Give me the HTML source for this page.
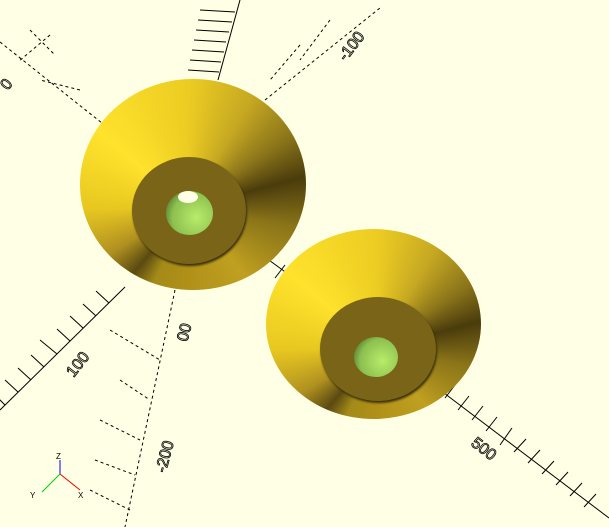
<!DOCTYPE html>
<html><head><style>
html,body{margin:0;padding:0;background:#ffffe5;width:609px;height:527px;overflow:hidden;position:relative;font-family:"Liberation Sans",sans-serif}
.c{position:absolute;border-radius:50%}
</style></head><body>
<svg width="609" height="527" style="position:absolute;left:0;top:0" stroke="#000" fill="none" stroke-width="1">
 <line x1="440" y1="390" x2="609" y2="518"/>
 <g>
  <line x1="455" y1="385" x2="445" y2="398"/>
  <line x1="469" y1="396" x2="458" y2="410"/>
  <line x1="483" y1="406" x2="472" y2="420"/>
  <line x1="497" y1="417" x2="486" y2="431"/>
  <line x1="512" y1="428" x2="500" y2="445"/>
  <line x1="526" y1="439" x2="514" y2="452"/>
  <line x1="540" y1="450" x2="528" y2="463"/>
  <line x1="554" y1="461" x2="542" y2="474"/>
  <line x1="568" y1="472" x2="556" y2="485"/>
  <line x1="582" y1="483" x2="570" y2="496"/>
  <line x1="596" y1="494" x2="584" y2="507"/>
 </g>
 <g fill="none" stroke="#000" stroke-width="0.8">
 <text x="470" y="455" font-size="16" transform="rotate(38 485 450)">500</text>
 <text x="60" y="370" font-size="16" transform="rotate(-52 75 360)">100</text>
 <text x="330" y="50" font-size="16" transform="rotate(-52 350 40)">-100</text>
 <text x="0" y="85" font-size="16" transform="rotate(-52 10 80)">0</text>
 <text x="170" y="340" font-size="16" transform="rotate(-75 180 330)">00</text>
 <text x="140" y="470" font-size="16" transform="rotate(-75 155 455)">-200</text>
 </g>
 <line x1="0" y1="410" x2="125" y2="287"/>
 <g>
  <line x1="5" y1="405" x2="-5" y2="395"/>
  <line x1="18" y1="392" x2="5" y2="380"/>
  <line x1="31" y1="380" x2="18" y2="368"/>
  <line x1="44" y1="367" x2="31" y2="355"/>
  <line x1="57" y1="354" x2="40" y2="340"/>
  <line x1="70" y1="341" x2="57" y2="329"/>
  <line x1="83" y1="328" x2="70" y2="316"/>
  <line x1="96" y1="316" x2="83" y2="304"/>
  <line x1="109" y1="303" x2="96" y2="291"/>
 </g>
 <line x1="240" y1="0" x2="218" y2="80"/>
 <g>
  <line x1="200" y1="10" x2="235" y2="12"/>
  <line x1="198" y1="20" x2="232" y2="22"/>
  <line x1="196" y1="30" x2="229" y2="32"/>
  <line x1="194" y1="40" x2="226" y2="42"/>
  <line x1="192" y1="50" x2="224" y2="52"/>
  <line x1="190" y1="60" x2="221" y2="62"/>
  <line x1="188" y1="70" x2="219" y2="72"/>
 </g>
 <g stroke-dasharray="3,3">
  <line x1="0" y1="42" x2="268" y2="255"/>
  <line x1="265" y1="100" x2="380" y2="8"/>
  <line x1="175" y1="290" x2="125" y2="527"/>
  <line x1="30" y1="30" x2="55" y2="55"/><line x1="50" y1="35" x2="18" y2="62"/>
  <line x1="80" y1="90" x2="40" y2="80"/>
  <line x1="330" y1="20" x2="300" y2="60"/><line x1="300" y1="45" x2="270" y2="80"/>
  <line x1="100" y1="420" x2="140" y2="440"/><line x1="95" y1="460" x2="135" y2="475"/>
  <line x1="90" y1="490" x2="130" y2="510"/><line x1="120" y1="380" x2="150" y2="400"/>
  <line x1="110" y1="330" x2="160" y2="360"/>
 </g>
 <line x1="262" y1="255" x2="310" y2="290"/>
 <line x1="285" y1="265" x2="275" y2="278"/><line x1="300" y1="270" x2="290" y2="285"/>
 <line x1="60" y1="474" x2="60" y2="460" stroke="#00f"/>
 <line x1="60" y1="474" x2="80" y2="490" stroke="#e00"/>
 <line x1="60" y1="474" x2="42" y2="492" stroke="#0c0"/>
 <text x="56" y="459" font-size="8" stroke="none" fill="#000">Z</text>
 <text x="78" y="498" font-size="8" stroke="none" fill="#000">X</text>
 <text x="30" y="498" font-size="8" stroke="none" fill="#000">Y</text>
</svg>
<div class="c" style="left:80px;top:79px;width:226px;height:211px;background:conic-gradient(from 0deg at 48% 61%,#eccc22 0deg,#c6a822 30deg,#8a741a 55deg,#4a3c0c 75deg,#8a7418 100deg,#c0a020 140deg,#b09018 180deg,#a48a18 205deg,#5a4a10 220deg,#b09020 240deg,#e8c820 270deg,#ffe22c 310deg,#eccc22 360deg)"></div>
<div class="c" style="left:132px;top:157px;width:114px;height:107px;background:#7a6418;box-shadow:1px 2px 2px #3a300a"></div>
<div class="c" style="left:166px;top:191px;width:47px;height:44px;background:radial-gradient(circle at 65% 60%,#b8ec6a,#8cc050 60%,#3a5020)"></div>
<div class="c" style="left:178px;top:191px;width:20px;height:12px;background:#ffffe5"></div>
<div class="c" style="left:266px;top:229px;width:215px;height:190px;background:conic-gradient(from 0deg at 52% 63%,#eccc22 0deg,#c6a822 30deg,#8a741a 55deg,#4a3c0c 75deg,#8a7418 100deg,#c0a020 140deg,#b09018 180deg,#a48a18 205deg,#5a4a10 220deg,#b09020 240deg,#e8c820 270deg,#ffe22c 310deg,#eccc22 360deg)"></div>
<div class="c" style="left:320px;top:297px;width:116px;height:104px;background:#7a6418;box-shadow:1px 2px 2px #3a300a"></div>
<div class="c" style="left:354px;top:337px;width:44px;height:40px;background:radial-gradient(circle at 65% 60%,#b8ec6a,#8cc050 60%,#3a5020)"></div>
</body></html>
